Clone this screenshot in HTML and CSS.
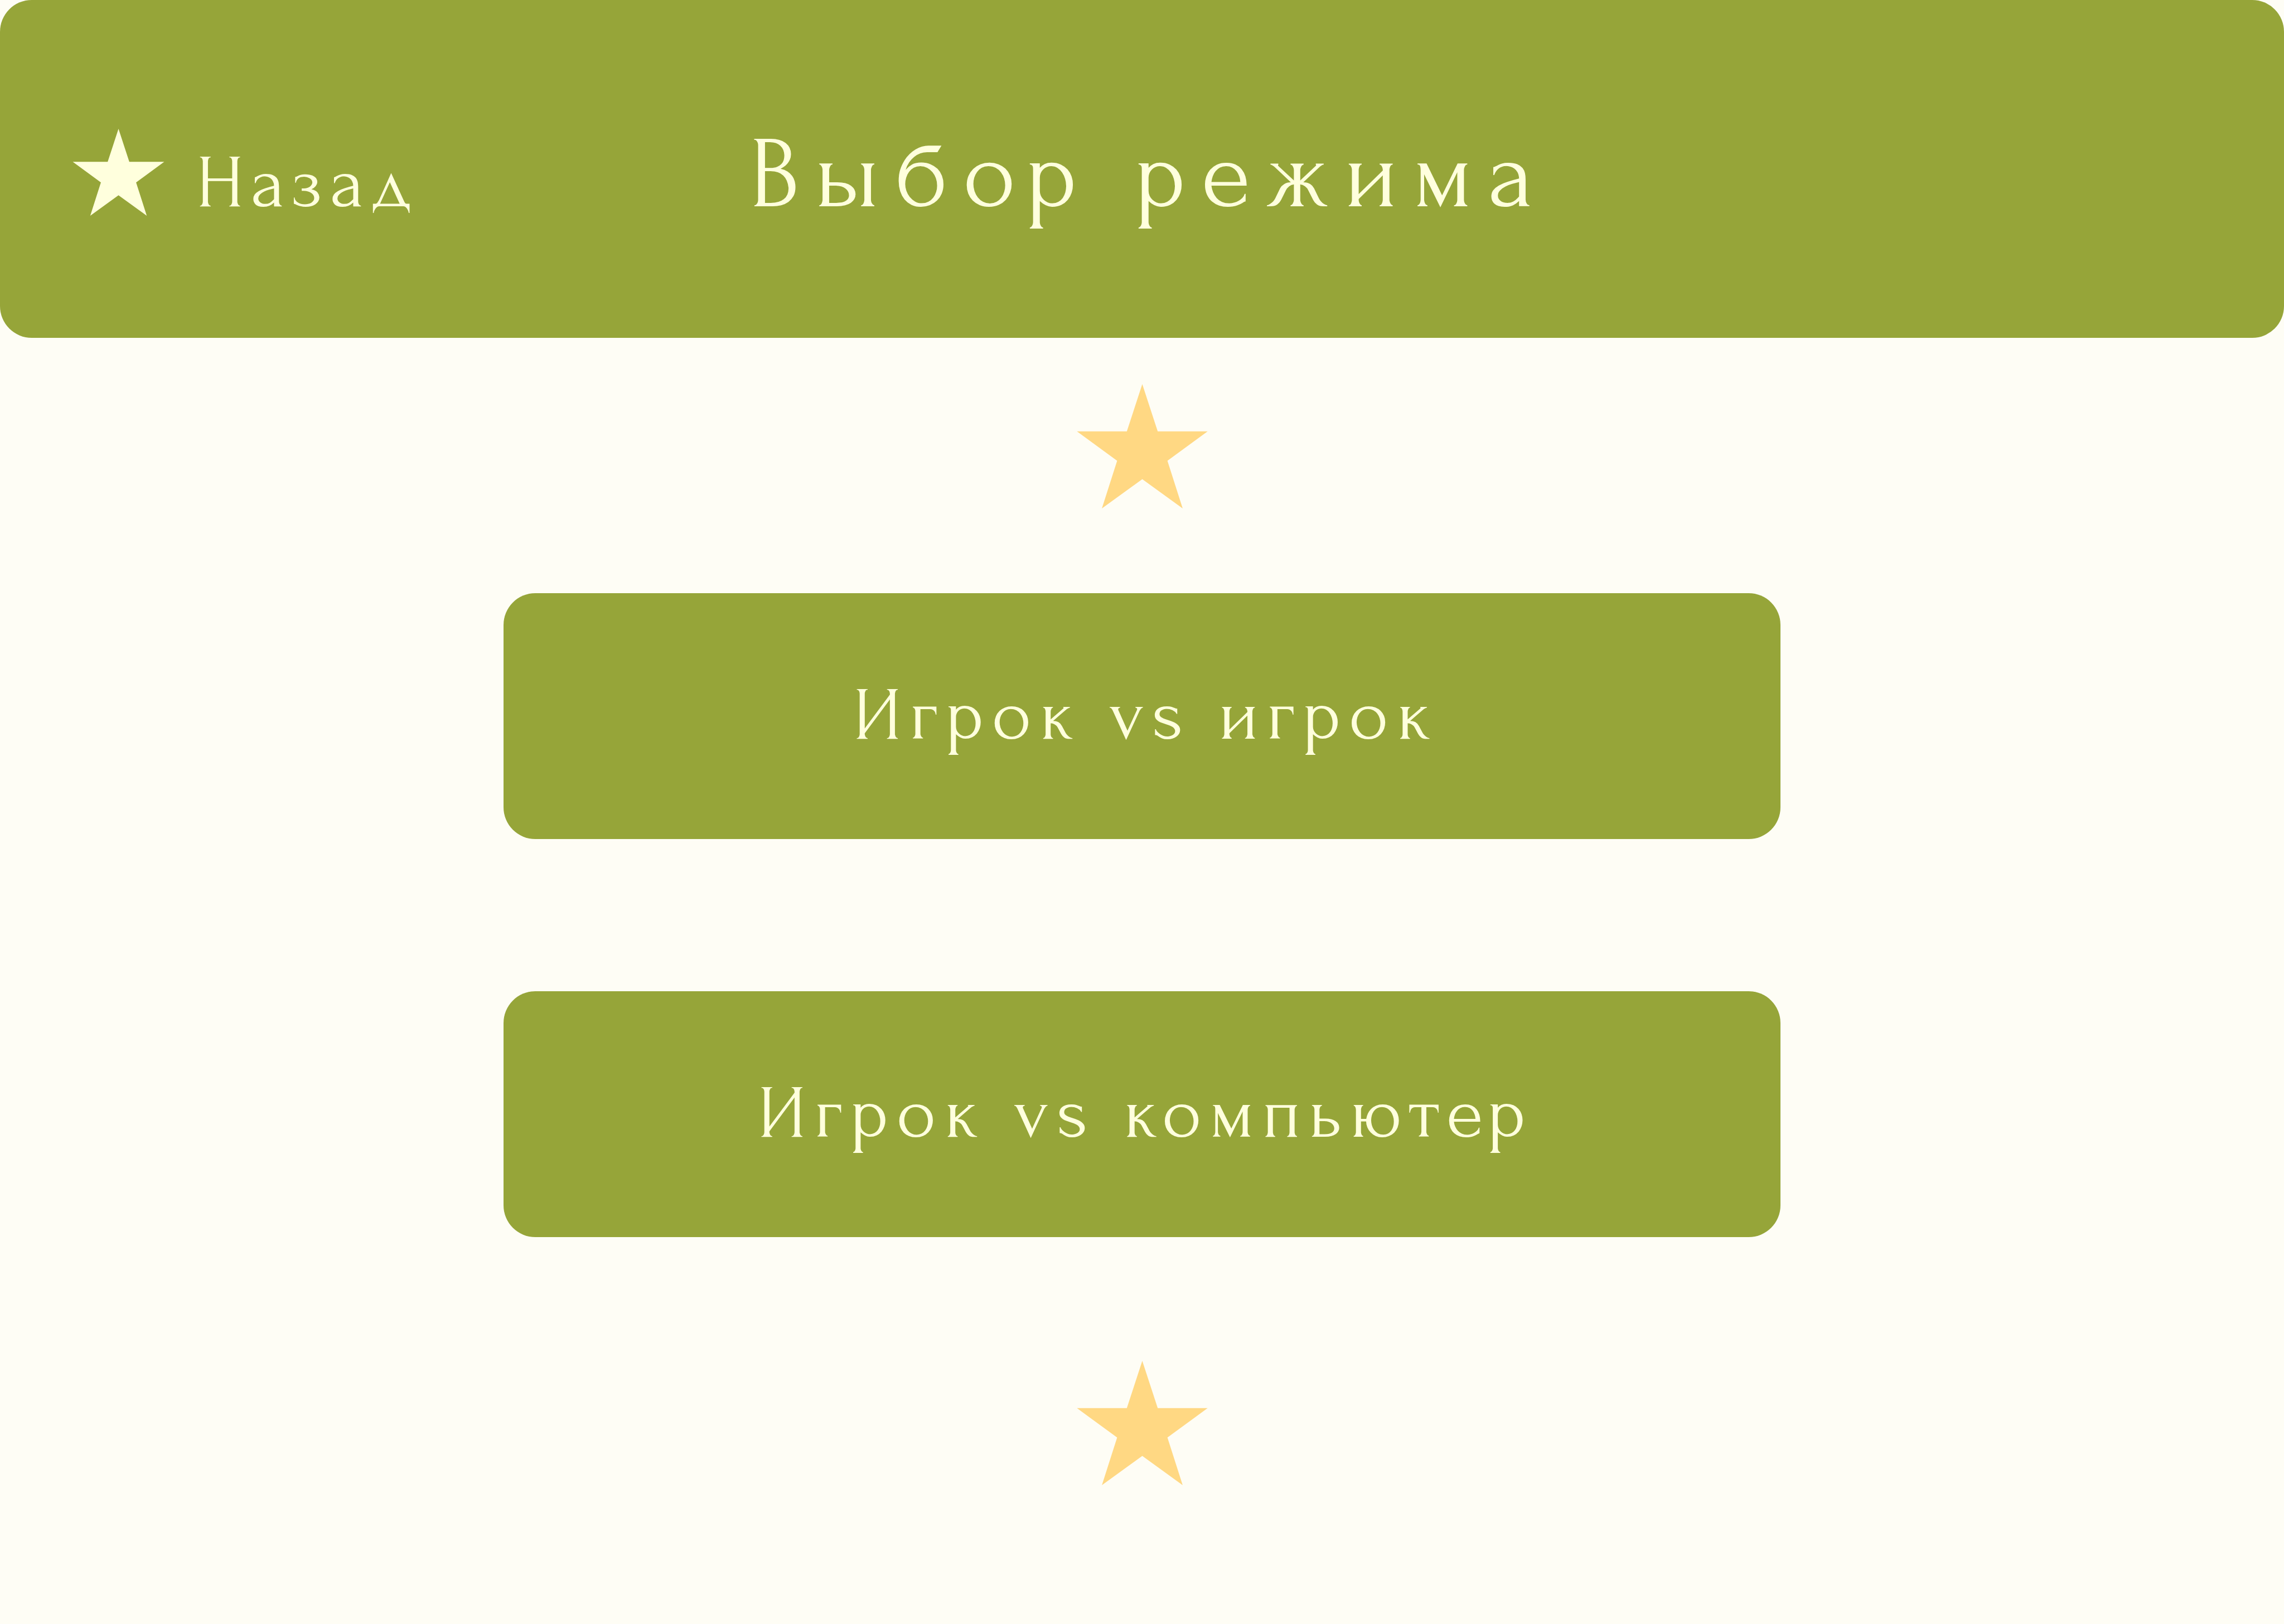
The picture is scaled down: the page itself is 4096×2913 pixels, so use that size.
FILE: index.html
```html
<!DOCTYPE html>
<html lang="ru">
<head>
  <meta charset="utf-8">
  <meta name="viewport" content="width=device-width, initial-scale=1">
  <title>Выбор режима</title>
  <link rel="stylesheet" href="styles.css">
</head>
<body>
  <svg class="sprite" aria-hidden="true">
    <symbol id="star" viewBox="0 0 330 314">
      <path d="M165 0 204 119.5H330L228.500 193.500 267 314 165 240 63 314 101.500 193.500 0 119.500H126Z"/>
    </symbol>
  </svg>
  <header class="header">
    <a class="back" href="#">
      <svg class="back-star" aria-hidden="true"><use href="#star"/></svg>
      <span>Назад</span>
    </a>
    <h1 class="title">Выбор режима</h1>
  </header>
  <main class="modes">
    <svg class="star" aria-hidden="true"><use href="#star"/></svg>
    <div class="mode-list">
      <button class="mode" type="button">Игрок vs игрок</button>
      <button class="mode" type="button">Игрок vs компьютер</button>
    </div>
    <svg class="star" aria-hidden="true"><use href="#star"/></svg>
  </main>
</body>
</html>
```
FILE: styles.css
```css
* {
  box-sizing: border-box;
}

body {
  margin: 0;
  min-height: 100vh;
  background: #fefdf5;
  color: #ffffdd;
  font-family: Forum, "Liberation Serif", serif;
  font-size: 136px;
  line-height: 160px;
  letter-spacing: 14px;
}

.sprite {
  position: absolute;
  width: 0;
  height: 0;
}

.header {
  display: grid;
  grid-template-columns: 1fr auto 1fr;
  align-items: start;
  padding: 207px 130px 179px;
  background: #96a539;
  border-radius: 57px;
}

.back {
  display: flex;
  align-items: center;
  gap: 56px;
  margin-top: 24px;
  color: inherit;
  text-decoration: none;
}

.back-star {
  width: 165px;
  height: 156px;
  margin-bottom: 40px;
  fill: #ffffdd;
}

.title {
  margin: 0;
  font-size: 182px;
  font-weight: 400;
  line-height: 216px;
  letter-spacing: 27px;
  text-indent: 27px;
}

.modes {
  display: flex;
  flex-direction: column;
  align-items: center;
  padding: 83px 0;
}

.star {
  width: 235px;
  height: 223px;
  fill: #ffd883;
}

.mode-list {
  display: flex;
  flex-direction: column;
  gap: 273px;
  width: 55.9%;
  margin: 152px 0 222px;
}

.mode {
  padding: 140px 0 141px;
  border: 0;
  border-radius: 57px;
  background: #96a539;
  color: inherit;
  font: inherit;
  letter-spacing: inherit;
  text-indent: 14px;
  cursor: pointer;
}
```
